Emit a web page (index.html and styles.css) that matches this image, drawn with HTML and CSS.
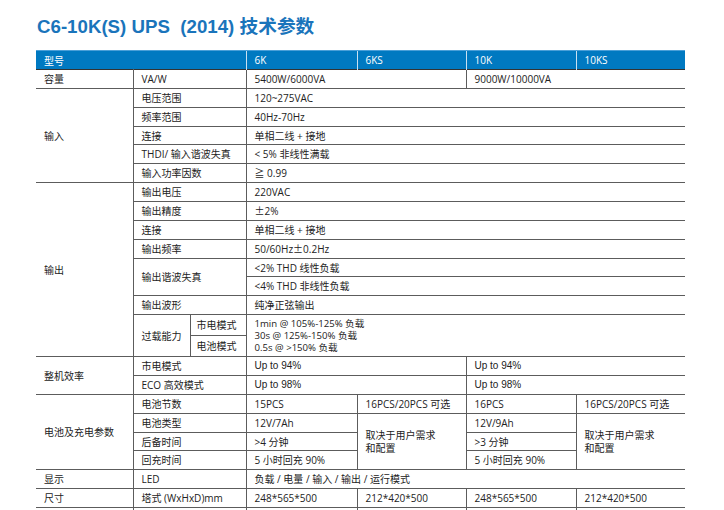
FILE: index.html
```html
<!DOCTYPE html>
<html lang="zh">
<head>
<meta charset="utf-8">
<title>C6-10K(S) UPS (2014) 技术参数</title>
<link rel="stylesheet" href="styles.css">
</head>
<body>
<div class="page">
  <h1 class="title">C6-10K(S) UPS&nbsp; (2014) 技术参数</h1>
  <table class="spec">
    <colgroup>
      <col class="c1"><col class="c2a"><col class="c2b"><col class="c3"><col class="c4"><col class="c5"><col class="c6">
    </colgroup>
    <thead>
      <tr class="hd">
        <th colspan="3">型号</th><th>6K</th><th>6KS</th><th>10K</th><th>10KS</th>
      </tr>
    </thead>
    <tbody>
      <tr class="r grp"><td>容量</td><td colspan="2">VA/W</td><td colspan="2">5400W/6000VA</td><td colspan="2">9000W/10000VA</td></tr>

      <tr class="r grp"><td rowspan="5">输入</td><td colspan="2">电压范围</td><td colspan="4">120~275VAC</td></tr>
      <tr class="r"><td colspan="2">频率范围</td><td colspan="4">40Hz-70Hz</td></tr>
      <tr class="r"><td colspan="2">连接</td><td colspan="4">单相二线 + 接地</td></tr>
      <tr class="r"><td colspan="2">THDI/ 输入谐波失真</td><td colspan="4">&lt; 5% 非线性满载</td></tr>
      <tr class="r"><td colspan="2">输入功率因数</td><td colspan="4">≧ 0.99</td></tr>

      <tr class="r grp dark"><td rowspan="9">输出</td><td colspan="2">输出电压</td><td colspan="4">220VAC</td></tr>
      <tr class="r"><td colspan="2">输出精度</td><td colspan="4"><span class="cjk">±</span>2%</td></tr>
      <tr class="r"><td colspan="2">连接</td><td colspan="4">单相二线 + 接地</td></tr>
      <tr class="r"><td colspan="2">输出频率</td><td colspan="4">50/60Hz<span class="cjk">±</span>0.2Hz</td></tr>
      <tr class="r"><td colspan="2" rowspan="2">输出谐波失真</td><td colspan="4">&lt;2% THD 线性负载</td></tr>
      <tr class="r"><td colspan="4">&lt;4% THD 非线性负载</td></tr>
      <tr class="r"><td colspan="2">输出波形</td><td colspan="4">纯净正弦输出</td></tr>
      <tr class="ov"><td rowspan="2">过载能力</td><td class="mode">市电模式</td><td colspan="4" rowspan="2" class="multi small">1min @ 105%-125% 负载<br>30s @ 125%-150% 负载<br>0.5s @ &gt;150% 负载</td></tr>
      <tr class="ov"><td class="mode">电池模式</td></tr>

      <tr class="r grp"><td rowspan="2">整机效率</td><td colspan="2">市电模式</td><td colspan="2" class="latin">Up to 94%</td><td colspan="2" class="latin">Up to 94%</td></tr>
      <tr class="r"><td colspan="2">ECO 高效模式</td><td colspan="2" class="latin">Up to 98%</td><td colspan="2" class="latin">Up to 98%</td></tr>

      <tr class="r grp"><td rowspan="4">电池及充电参数</td><td colspan="2">电池节数</td><td>15PCS</td><td>16PCS/20PCS 可选</td><td>16PCS</td><td>16PCS/20PCS 可选</td></tr>
      <tr class="r"><td colspan="2">电池类型</td><td>12V/7Ah</td><td rowspan="3" class="multi wide">取决于用户需求<br>和配置</td><td>12V/9Ah</td><td rowspan="3" class="multi wide">取决于用户需求<br>和配置</td></tr>
      <tr class="r"><td colspan="2">后备时间</td><td>&gt;4 分钟</td><td>&gt;3 分钟</td></tr>
      <tr class="r"><td colspan="2">回充时间</td><td>5 小时回充 90%</td><td>5 小时回充 90%</td></tr>

      <tr class="r grp"><td>显示</td><td colspan="2">LED</td><td colspan="4">负载 / 电量 / 输入 / 输出 / 运行模式</td></tr>
      <tr class="r grp"><td>尺寸</td><td colspan="2">塔式 (WxHxD)mm</td><td>248*565*500</td><td>212*420*500</td><td>248*565*500</td><td>212*420*500</td></tr>
      <tr class="r grp dark"><td></td><td colspan="2"></td><td></td><td></td><td></td><td></td></tr>
    </tbody>
  </table>
</div>
</body>
</html>
```

FILE: styles.css
```css
html, body {
  margin: 0;
  padding: 0;
  background: #ffffff;
}

.page {
  padding: 16px 0 0 36px;
}

.title {
  margin: 0 0 12px 1px;
  font-family: "Liberation Sans", "Noto Sans CJK SC", sans-serif;
  font-weight: bold;
  font-size: 18.7px;
  line-height: 22px;
  color: #1a74bb;
  white-space: nowrap;
}

.spec {
  border-collapse: collapse;
  table-layout: fixed;
  width: 649px;
  font-family: "Open Sans", "Noto Sans CJK SC", sans-serif;
  font-size: 10px;
  color: #222;
}

.c1 { width: 97px; }
.c2a { width: 57px; }
.c2b { width: 56px; }
.c3 { width: 111px; }
.c4 { width: 109px; }
.c5 { width: 110px; }
.c6 { width: 109px; }

.hd th {
  height: 19px;
  padding: 0 0 0 8px;
  background: #0079c1;
  color: #ffffff;
  font-weight: normal;
  text-align: left;
  border-left: 1px solid #c9e0f1;
  border-top: 1px solid #4a9fd8;
  box-sizing: border-box;
}

.hd th:first-child {
  border-left: none;
}

.spec td {
  padding: 0 2px 0 8px;
  border: 1px solid #5c5c5c;
  white-space: nowrap;
  vertical-align: middle;
  line-height: 12px;
  overflow: hidden;
}

.spec td:first-child {
  border-left: none;
}

.spec td:last-child {
  border-right: none;
}

.r {
  height: 18.86px;
}

.ov {
  height: 21px;
}

.grp td {
  border-top-color: #333;
}

.dark td {
  border-top-color: #111;
}

.spec td.mode {
  padding-left: 6px;
}

.spec td.multi {
  line-height: 12px;
}

.spec td.wide {
  line-height: 13px;
}

.spec td.small {
  font-size: 9.6px;
}

.spec td.latin {
  font-family: "Liberation Sans", sans-serif;
  font-size: 10px;
}

.cjk {
  font-family: "Noto Sans CJK SC", sans-serif;
}
```
